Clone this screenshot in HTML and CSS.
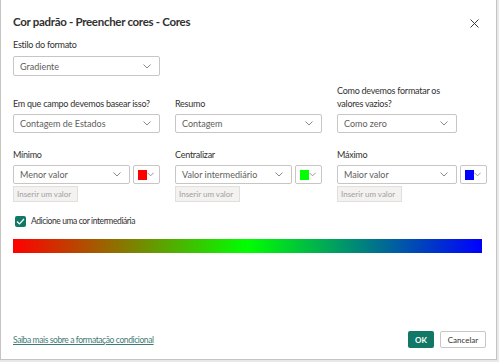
FILE: index.html
```html
<!DOCTYPE html>
<html lang="pt">
<head>
  <meta charset="UTF-8" />
  <title>Cor padrão - Preencher cores - Cores</title>
  <link rel="stylesheet" href="styles.css">
</head>
<body>
  <div class="dialog">
    <div class="header">
      <h1>Cor padrão - Preencher cores - Cores</h1>
      <span class="close"><svg width="9" height="9" viewBox="0 0 9 9"><path d="M0.5 0.5 L8.5 8.5 M8.5 0.5 L0.5 8.5" stroke="#3b3a39" stroke-width="1" fill="none"/></svg></span>
    </div>

    <div class="label first">Estilo do formato</div>
    <div class="select wide">Gradiente<svg class="chev" width="8" height="5" viewBox="0 0 8 5"><path d="M0.5 0.5 L4 4 L7.5 0.5" stroke="#8a8886" fill="none"/></svg></div>

    <div class="grid row2">
      <div class="cell">
        <div class="label">Em que campo devemos basear isso?</div>
        <div class="select">Contagem de Estados<svg class="chev" width="8" height="5" viewBox="0 0 8 5"><path d="M0.5 0.5 L4 4 L7.5 0.5" stroke="#8a8886" fill="none"/></svg></div>
      </div>
      <div class="cell">
        <div class="label">Resumo</div>
        <div class="select">Contagem<svg class="chev" width="8" height="5" viewBox="0 0 8 5"><path d="M0.5 0.5 L4 4 L7.5 0.5" stroke="#8a8886" fill="none"/></svg></div>
      </div>
      <div class="cell">
        <div class="label">Como devemos formatar os valores vazios?</div>
        <div class="select narrow">Como zero<svg class="chev" width="8" height="5" viewBox="0 0 8 5"><path d="M0.5 0.5 L4 4 L7.5 0.5" stroke="#8a8886" fill="none"/></svg></div>
      </div>
    </div>

    <div class="grid row3">
      <div class="cell">
        <div class="label">Mínimo</div>
        <div class="pair">
          <div class="select">Menor valor<svg class="chev" width="8" height="5" viewBox="0 0 8 5"><path d="M0.5 0.5 L4 4 L7.5 0.5" stroke="#8a8886" fill="none"/></svg></div>
          <div class="swatch"><span class="red"></span><svg class="chev" width="8" height="5" viewBox="0 0 8 5"><path d="M0.5 0.5 L4 4 L7.5 0.5" stroke="#8a8886" fill="none"/></svg></div>
        </div>
        <div class="input">Inserir um valor</div>
      </div>
      <div class="cell">
        <div class="label">Centralizar</div>
        <div class="pair">
          <div class="select">Valor intermediário<svg class="chev" width="8" height="5" viewBox="0 0 8 5"><path d="M0.5 0.5 L4 4 L7.5 0.5" stroke="#8a8886" fill="none"/></svg></div>
          <div class="swatch"><span class="green"></span><svg class="chev" width="8" height="5" viewBox="0 0 8 5"><path d="M0.5 0.5 L4 4 L7.5 0.5" stroke="#8a8886" fill="none"/></svg></div>
        </div>
        <div class="input">Inserir um valor</div>
      </div>
      <div class="cell">
        <div class="label">Máximo</div>
        <div class="pair">
          <div class="select">Maior valor<svg class="chev" width="8" height="5" viewBox="0 0 8 5"><path d="M0.5 0.5 L4 4 L7.5 0.5" stroke="#8a8886" fill="none"/></svg></div>
          <div class="swatch"><span class="blue"></span><svg class="chev" width="8" height="5" viewBox="0 0 8 5"><path d="M0.5 0.5 L4 4 L7.5 0.5" stroke="#8a8886" fill="none"/></svg></div>
        </div>
        <div class="input">Inserir um valor</div>
      </div>
    </div>

    <div class="check">
      <span class="box"><svg width="9" height="7" viewBox="0 0 9 7"><path d="M1 3.5 L3.5 6 L8 1" stroke="#fff" stroke-width="1.2" fill="none"/></svg></span>
      Adicione uma cor intermediária
    </div>

    <div class="bar"></div>

    <div class="footer">
      <a href="#" class="link">Saiba mais sobre a formatação condicional</a>
      <div class="buttons">
        <button class="ok">OK</button>
        <button class="cancel">Cancelar</button>
      </div>
    </div>
  </div>
</body>
</html>
```

FILE: styles.css
```css
body { margin: 0; background: #e9e8e7; font-family: Lato, "Open Sans", sans-serif; color: #323130; }
.dialog { width: 473px; height: 359px; background: #fff; border: 1px solid #c4c4c4; border-top: none; padding: 0 10px 0 12px; display: flex; flex-direction: column; }
.header { display: flex; justify-content: space-between; align-items: center; padding-top: 12px; }
h1 { margin: 0; font-size: 11.5px; font-weight: 700; line-height: 20px; letter-spacing: -0.3px; }
.close { display: flex; margin-right: 7px; margin-top: 2px; }
.label { font-size: 9px; line-height: 13px; color: #323130; letter-spacing: -0.25px; }
.label.first { margin-top: 6px; }
.select { box-sizing: border-box; height: 19px; margin-top: 4px; border: 1px solid #c8c6c4; border-radius: 2px; font-size: 9px; color: #605e5c; padding: 0 8px 0 6px; display: flex; align-items: center; justify-content: space-between; white-space: nowrap; }
.select.wide { width: 147px; height: 20px; margin-top: 5px; }
.select.narrow { width: 120px; }
.grid { display: grid; grid-template-columns: 147px 147px 150px; column-gap: 15px; }
.cell { display: flex; flex-direction: column; justify-content: flex-end; }
.row2 { margin-top: 8px; }
.row2 .cell:last-child .label { padding-right: 20px; }
.row3 { margin-top: 15px; }
.row3 .cell { justify-content: flex-start; }
.pair { display: flex; gap: 3px; }
.pair .select { flex: 1; }
.swatch { box-sizing: border-box; width: 27px; height: 19px; margin-top: 4px; border: 1px solid #c8c6c4; border-radius: 2px; display: flex; align-items: center; justify-content: space-between; padding: 0 5px 0 4px; }
.swatch span { width: 10px; height: 10px; }
.red { background: #ff0000; }
.green { background: #00ff00; }
.blue { background: #0000ff; }
.input { box-sizing: border-box; width: 65px; height: 16px; margin-top: 2px; background: #f3f2f1; border: 1px solid #e1dfdd; font-size: 8px; color: #a19f9d; padding-left: 3px; display: flex; align-items: center; white-space: nowrap; }
.check { display: flex; align-items: center; gap: 5px; margin-top: 13px; font-size: 8.5px; letter-spacing: -0.4px; color: #323130; height: 12px; padding-left: 2px; }
.box { width: 11px; height: 11px; background: #117865; border-radius: 2px; display: flex; align-items: center; justify-content: center; }
.bar { width: 469px; height: 14px; margin-top: 12px; background: linear-gradient(to right, #ff0000, #00ff00, #0000ff); }
.footer { margin-top: auto; padding-bottom: 11px; display: flex; justify-content: space-between; align-items: center; }
.link { font-size: 8.5px; letter-spacing: -0.4px; color: #3f7a74; text-decoration: underline; }
.buttons { display: flex; gap: 6px; }
button { font-family: inherit; height: 17px; font-size: 8px; border-radius: 2px; padding: 0; cursor: pointer; }
.ok { width: 26px; background: #117865; color: #fff; border: none; font-weight: 700; }
.cancel { width: 46px; background: #fff; color: #323130; border: 1px solid #c8c6c4; }
```
